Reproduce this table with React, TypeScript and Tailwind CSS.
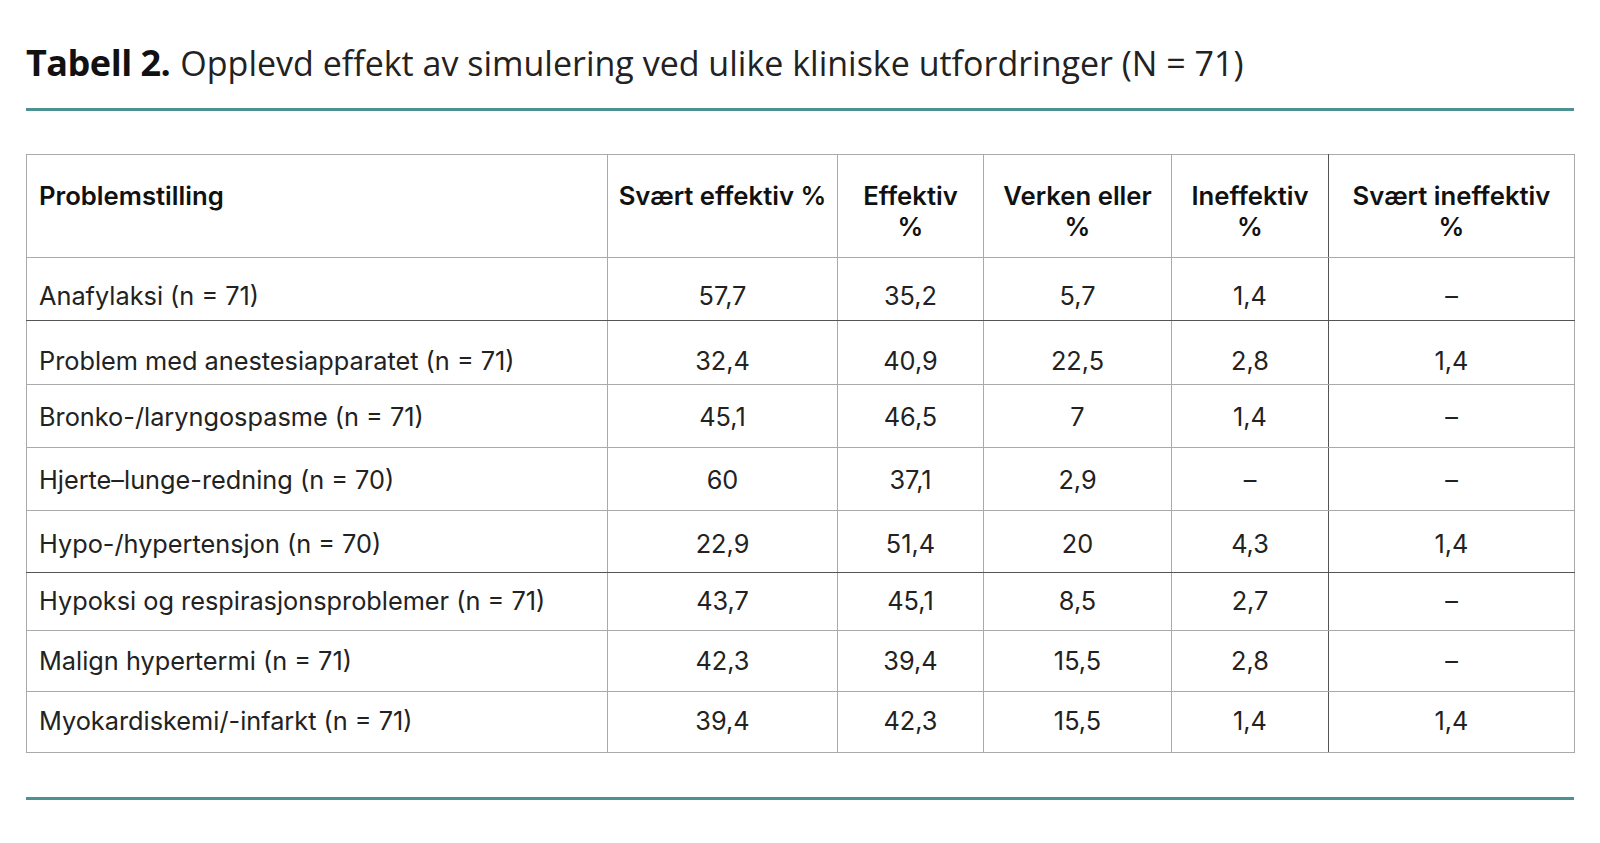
import React from 'react';

type Row = {
  label: string;
  values: string[];
  h: string;
  pad: string;
  darkBottom?: boolean;
};

const rows: Row[] = [
  { label: 'Anafylaksi (n = 71)', values: ['57,7', '35,2', '5,7', '1,4', '–'], h: 'h-[63px]', pad: 'pt-[14px]', darkBottom: true },
  { label: 'Problem med anestesiapparatet (n = 71)', values: ['32,4', '40,9', '22,5', '2,8', '1,4'], h: 'h-[64px]', pad: 'pt-[16px]' },
  { label: 'Bronko-/laryngospasme (n = 71)', values: ['45,1', '46,5', '7', '1,4', '–'], h: 'h-[63px]', pad: 'pt-[2px]' },
  { label: 'Hjerte–lunge-redning (n = 70)', values: ['60', '37,1', '2,9', '–', '–'], h: 'h-[63px]', pad: 'pt-[2px]' },
  { label: 'Hypo-/hypertensjon (n = 70)', values: ['22,9', '51,4', '20', '4,3', '1,4'], h: 'h-[62px]', pad: 'pt-[4px]', darkBottom: true },
  { label: 'Hypoksi og respirasjonsproblemer (n = 71)', values: ['43,7', '45,1', '8,5', '2,7', '–'], h: 'h-[58px]', pad: 'pt-0 pb-[2px]' },
  { label: 'Malign hypertermi (n = 71)', values: ['42,3', '39,4', '15,5', '2,8', '–'], h: 'h-[61px]', pad: 'pt-0' },
  { label: 'Myokardiskemi/-infarkt (n = 71)', values: ['39,4', '42,3', '15,5', '1,4', '1,4'], h: 'h-[61px]', pad: 'pt-0 pb-[2px]' },
];

const widths = ['w-[581px]', 'w-[230px]', 'w-[146px]', 'w-[188px]', 'w-[157px]', 'w-[246px]'];

const th = 'border border-[#aaaaaa] pt-[25px] text-center align-top text-[25.7px] font-semibold leading-[31px] text-[#111]';

export default function App() {
  return (
    <div className="min-h-screen bg-white px-[26px] pt-[45px] text-[#222]" style={{ fontFamily: 'Inter, "Noto Sans", sans-serif' }}>
      {/* Title */}
      <h1
        className="flex h-[46px] items-baseline whitespace-nowrap"
        style={{ fontFamily: '"Open Sans", "Noto Sans", sans-serif' }}
      >
        <span className="text-[36px] font-bold leading-none tracking-[-0.5px] text-[#111]">Tabell 2.</span>
        <span className="ml-[10px] text-[34px] font-normal leading-none">
          Opplevd effekt av simulering ved ulike kliniske utfordringer (N = 71)
        </span>
      </h1>
      <div className="mt-[17px] h-[3px] w-[1548px] bg-[#4e9191]" />

      {/* Table */}
      <table className="mt-[43px] w-[1548px] table-fixed border-collapse text-[25.3px] font-normal">
        <colgroup>
          {widths.map((w, i) => (
            <col key={i} className={w} />
          ))}
        </colgroup>
        <thead>
          <tr className="h-[103px]">
            <th className="border border-[#aaaaaa] px-[12px] pt-[25px] text-left align-top text-[25.7px] font-semibold leading-[31px] text-[#111]">
              Problemstilling
            </th>
            <th className={th}>Svært effektiv %</th>
            <th className={th}>
              Effektiv
              <br />%
            </th>
            <th className={th}>
              Verken eller
              <br />%
            </th>
            <th className={`${th} border-r-[#555555]`}>
              Ineffektiv
              <br />%
            </th>
            <th className={th}>
              Svært ineffektiv
              <br />%
            </th>
          </tr>
        </thead>
        <tbody>
          {rows.map((r) => (
            <tr key={r.label} className={r.h}>
              <td
                className={`border border-[#aaaaaa] px-[12px] align-middle ${r.pad} ${
                  r.darkBottom ? 'border-b-[#555555]' : ''
                }`}
              >
                {r.label}
              </td>
              {r.values.map((v, i) => (
                <td
                  key={i}
                  className={`border border-[#aaaaaa] text-center align-middle ${r.pad} ${
                    r.darkBottom ? 'border-b-[#555555]' : ''
                  } ${i === 3 ? 'border-r-[#555555]' : ''}`}
                >
                  {v}
                </td>
              ))}
            </tr>
          ))}
        </tbody>
      </table>

      <div className="mt-[44px] h-[3px] w-[1548px] bg-[#4e9191]" />
    </div>
  );
}
